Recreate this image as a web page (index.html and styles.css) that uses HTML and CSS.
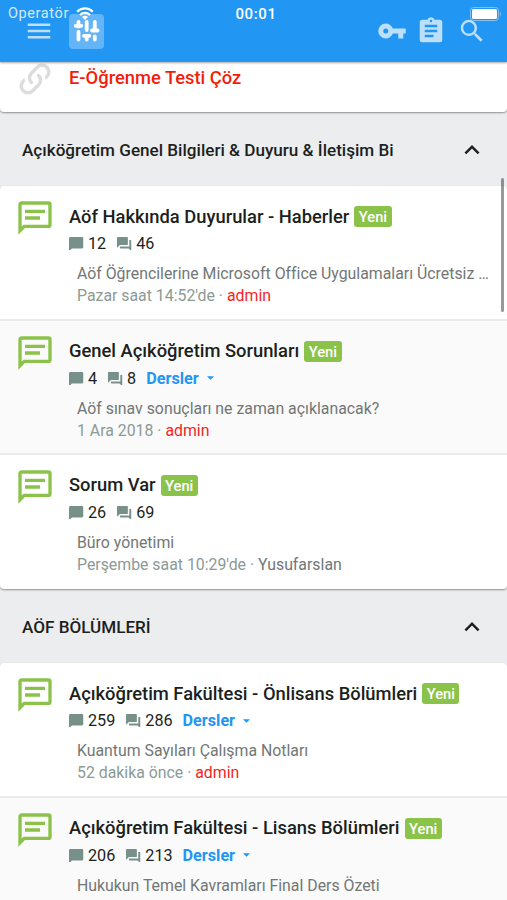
FILE: index.html
```html
<!doctype html>
<html lang="tr">
  <head>
    <meta charset="UTF-8" />
    <meta name="viewport" content="width=device-width, initial-scale=1.0" />
    <title>Açıköğretim Forum</title>
    <link rel="stylesheet" href="styles.css">
  </head>
  <body>
    <!-- Shared icons -->
    <svg class="sprite" width="0" height="0">
      <symbol id="i-forum" viewBox="0 0 24 24"><path d="M20,2A2,2 0 0,1 22,4V16A2,2 0 0,1 20,18H6L2,22V4C2,2.89 2.9,2 4,2H20M4,4V17.17L5.17,16H20V4H4M6,7H18V9H6V7M6,11H15V13H6V11Z"/></symbol>
      <symbol id="i-topics" viewBox="2 2 20 18"><path d="M20,2H4A2,2 0 0,0 2,4V22L6,18H20A2,2 0 0,0 22,16V4C22,2.89 21.1,2 20,2Z"/></symbol>
      <symbol id="i-posts" viewBox="2 2 20 18"><path d="M17,12V3A1,1 0 0,0 16,2H3A1,1 0 0,0 2,3V17L6,13H16A1,1 0 0,0 17,12M21,6H19V15H6V17A1,1 0 0,0 7,18H18L22,22V7A1,1 0 0,0 21,6Z"/></symbol>
      <symbol id="i-up" viewBox="0 0 24 24"><path d="M7.41,15.41L12,10.83L16.59,15.41L18,14L12,8L6,14L7.41,15.41Z"/></symbol>
      <symbol id="i-down" viewBox="0 0 10 5"><path d="M0,0H10L5,5Z"/></symbol>
    </svg>

    <header class="header">
      <div class="status-bar">
        <div class="network">
          <span class="carrier">Operatör</span>
          <svg class="wifi" viewBox="0 0 18 13"><path d="M1.2,4.8A10.8,10.8 0 0,1 16.8,4.8M4,7.9A7,7 0 0,1 14,7.9" /><path class="dot" d="M9,13L6,10A4.2,4.2 0 0,1 12,10Z"/></svg>
        </div>
        <span class="clock">00:01</span>
        <svg class="battery" viewBox="0 0 32 14"><rect class="shell" x="0.5" y="0.5" width="28" height="13" rx="3"/><rect x="2" y="2" width="25" height="10" rx="1.5"/><path class="tip" d="M30,4.5Q32,7 30,9.5Z"/></svg>
      </div>
      <nav class="nav">
        <svg class="icon" viewBox="0 0 24 24"><path d="M3,6H21V8H3V6M3,11H21V13H3V11M3,16H21V18H3V16Z"/></svg>
        <span class="logo">
          <svg viewBox="0 0 35 35"><path d="M9.5,8V12.5M9.5,18V25.5M17.7,8V16M17.7,22V25.5M25.8,8V15.5M25.8,22.5V25.5M6.8,11.8H12.4M15,21.8H20.4M23,16.5H28.6"/></svg>
        </span>
        <svg class="icon key" viewBox="0 0 24 24"><path d="M7,14A2,2 0 0,1 5,12A2,2 0 0,1 7,10A2,2 0 0,1 9,12A2,2 0 0,1 7,14M12.65,10C11.83,7.67 9.61,6 7,6A6,6 0 0,0 1,12A6,6 0 0,0 7,18C9.61,18 11.83,16.33 12.65,14H17V18H21V14H23V10H12.65Z"/></svg>
        <svg class="icon clipboard" viewBox="0 0 24 24"><path d="M17,9H7V7H17M17,13H7V11H17M14,17H7V15H14M12,3A1,1 0 0,1 13,4A1,1 0 0,1 12,5A1,1 0 0,1 11,4A1,1 0 0,1 12,3M19,3H14.82C14.4,1.84 13.3,1 12,1C10.7,1 9.6,1.84 9.18,3H5A2,2 0 0,0 3,5V19A2,2 0 0,0 5,21H19A2,2 0 0,0 21,19V5A2,2 0 0,0 19,3Z"/></svg>
        <svg class="icon search" viewBox="0 0 24 24"><path d="M9.5,3A6.5,6.5 0 0,1 16,9.5C16,11.11 15.41,12.59 14.44,13.73L14.71,14H15.5L20.5,19L19,20.5L14,15.5V14.71L13.73,14.44C12.59,15.41 11.11,16 9.5,16A6.5,6.5 0 0,1 3,9.5A6.5,6.5 0 0,1 9.5,3M9.5,5C7,5 5,7 5,9.5C5,12 7,14 9.5,14C12,14 14,12 14,9.5C14,7 12,5 9.5,5Z"/></svg>
      </nav>
    </header>

    <main>
      <section class="card link-card">
        <svg class="link-icon" viewBox="0 0 24 24"><path d="M10.59,13.41C11,13.8 11,14.44 10.59,14.83C10.2,15.22 9.56,15.22 9.17,14.83C7.22,12.88 7.22,9.71 9.17,7.76V7.76L12.71,4.22C14.66,2.27 17.83,2.27 19.78,4.22C21.73,6.17 21.73,9.34 19.78,11.29L18.29,12.78C18.3,11.96 18.17,11.14 17.89,10.36L18.36,9.88C19.54,8.71 19.54,6.81 18.36,5.64C17.19,4.46 15.29,4.46 14.12,5.64L10.59,9.17C9.41,10.34 9.41,12.24 10.59,13.41M13.41,9.17C13.8,8.78 14.44,8.78 14.83,9.17C16.78,11.12 16.78,14.29 14.83,16.24V16.24L11.29,19.78C9.34,21.73 6.17,21.73 4.22,19.78C2.27,17.83 2.27,14.66 4.22,12.71L5.71,11.22C5.7,12.04 5.83,12.86 6.11,13.65L5.64,14.12C4.46,15.29 4.46,17.19 5.64,18.36C6.81,19.54 8.71,19.54 9.88,18.36L13.41,14.83C14.59,13.66 14.59,11.76 13.41,10.59C13,10.2 13,9.56 13.41,9.17Z"/></svg>
        <a class="link-title">E-Öğrenme Testi Çöz</a>
      </section>

      <div class="category">
        <h2>Açıköğretim Genel Bilgileri &amp; Duyuru &amp; İletişim Bi</h2>
        <svg class="toggle"><use href="#i-up"/></svg>
      </div>
      <section class="card">
        <article class="forum">
          <svg class="forum-icon"><use href="#i-forum"/></svg>
          <div class="forum-body">
            <h3><span>Aöf Hakkında Duyurular - Haberler</span> <span class="badge">Yeni</span></h3>
            <div class="stats">
              <svg><use href="#i-topics"/></svg><span>12</span>
              <svg><use href="#i-posts"/></svg><span>46</span>
            </div>
            <p class="latest">Aöf Öğrencilerine Microsoft Office Uygulamaları Ücretsiz …</p>
            <p class="meta">Pazar saat 14:52'de · <span class="admin">admin</span></p>
          </div>
        </article>
        <article class="forum alt">
          <svg class="forum-icon"><use href="#i-forum"/></svg>
          <div class="forum-body">
            <h3><span>Genel Açıköğretim Sorunları</span> <span class="badge">Yeni</span></h3>
            <div class="stats">
              <svg><use href="#i-topics"/></svg><span>4</span>
              <svg><use href="#i-posts"/></svg><span>8</span>
              <a class="lessons">Dersler <svg><use href="#i-down"/></svg></a>
            </div>
            <p class="latest">Aöf sınav sonuçları ne zaman açıklanacak?</p>
            <p class="meta">1 Ara 2018 · <span class="admin">admin</span></p>
          </div>
        </article>
        <article class="forum">
          <svg class="forum-icon"><use href="#i-forum"/></svg>
          <div class="forum-body">
            <h3><span>Sorum Var</span> <span class="badge">Yeni</span></h3>
            <div class="stats">
              <svg><use href="#i-topics"/></svg><span>26</span>
              <svg><use href="#i-posts"/></svg><span>69</span>
            </div>
            <p class="latest">Büro yönetimi</p>
            <p class="meta">Perşembe saat 10:29'de · <span class="user">Yusufarslan</span></p>
          </div>
        </article>
      </section>

      <div class="category">
        <h2>AÖF BÖLÜMLERİ</h2>
        <svg class="toggle"><use href="#i-up"/></svg>
      </div>
      <section class="card">
        <article class="forum">
          <svg class="forum-icon"><use href="#i-forum"/></svg>
          <div class="forum-body">
            <h3><span>Açıköğretim Fakültesi - Önlisans Bölümleri</span> <span class="badge">Yeni</span></h3>
            <div class="stats">
              <svg><use href="#i-topics"/></svg><span>259</span>
              <svg><use href="#i-posts"/></svg><span>286</span>
              <a class="lessons">Dersler <svg><use href="#i-down"/></svg></a>
            </div>
            <p class="latest">Kuantum Sayıları Çalışma Notları</p>
            <p class="meta">52 dakika önce · <span class="admin">admin</span></p>
          </div>
        </article>
        <article class="forum alt">
          <svg class="forum-icon"><use href="#i-forum"/></svg>
          <div class="forum-body">
            <h3><span>Açıköğretim Fakültesi - Lisans Bölümleri</span> <span class="badge">Yeni</span></h3>
            <div class="stats">
              <svg><use href="#i-topics"/></svg><span>206</span>
              <svg><use href="#i-posts"/></svg><span>213</span>
              <a class="lessons">Dersler <svg><use href="#i-down"/></svg></a>
            </div>
            <p class="latest">Hukukun Temel Kavramları Final Ders Özeti</p>
          </div>
        </article>
      </section>
    </main>
    <div class="scrollbar"></div>
  </body>
</html>
```
FILE: styles.css
```css
* {
  box-sizing: border-box;
}

body {
  position: relative;
  margin: 0;
  height: 900px;
  overflow: hidden;
  background: #ecedef;
  color: #1c1f20;
  font-family: Roboto, "Liberation Sans", sans-serif;
}

h2,
h3,
p {
  margin: 0;
  font-weight: 500;
}

svg {
  display: block;
  flex: none;
  fill: currentColor;
}

.sprite {
  position: absolute;
}

/* Header */
.header {
  position: relative;
  z-index: 2;
  height: 62px;
  background: #2196f3;
  box-shadow: 0 1px 2px rgba(0, 0, 0, 0.35);
}

/* The phone's status bar lies over the navigation */
.status-bar {
  position: absolute;
  z-index: 1;
  top: 0;
  left: 0;
  right: 0;
  display: grid;
  grid-template-columns: 1fr auto 1fr;
  align-items: center;
  height: 27px;
  padding: 0 5px 0 8px;
  color: #fff;
  font-size: 14px;
}

.network {
  display: flex;
  align-items: center;
}

.carrier {
  width: 68px;
  color: #d3eafd;
  font-size: 14.5px;
  letter-spacing: 0.6px;
  white-space: nowrap;
}

.wifi {
  width: 18px;
  height: 13px;
  fill: none;
  stroke: #fff;
  stroke-width: 2.2;
}

.wifi .dot {
  fill: #fff;
  stroke: none;
}

.clock {
  padding-left: 2px;
  font-size: 15px;
  font-weight: 500;
  letter-spacing: 0.6px;
}

.battery {
  justify-self: end;
  width: 32px;
  height: 14px;
}

.battery .shell {
  fill: none;
  stroke: #7fc2f8;
}

.battery .tip {
  fill: #7fc2f8;
}

.nav {
  display: flex;
  align-items: center;
  height: 62px;
  padding-left: 24px;
}

.icon {
  width: 30px;
  height: 30px;
  color: #bcdffb;
}

.logo {
  width: 35px;
  height: 35px;
  margin-left: 15px;
  border-radius: 4px;
  background: #64b5f7;
}

.logo svg {
  width: 35px;
  height: 35px;
  fill: none;
  stroke: #fff;
  stroke-width: 3.8;
  stroke-linecap: round;
}

.key {
  margin-left: 273px;
}

.clipboard {
  margin: 0 11px 0 9px;
}

/* Cards */
.card {
  overflow: hidden;
  border-radius: 4px;
  background: #fff;
  box-shadow: 0 1px 2px rgba(0, 0, 0, 0.4);
}

.link-card {
  display: flex;
  height: 50px;
  padding-left: 15px;
  border-radius: 0 0 4px 4px;
}

.link-icon {
  width: 40px;
  height: 40px;
  margin-top: -3px;
  color: #dcdcdc;
}

.link-title {
  margin-left: 14px;
  color: #f21d0d;
  font-size: 18.35px;
  font-weight: 500;
  line-height: 32px;
}

.category {
  display: flex;
  align-items: center;
  justify-content: space-between;
  height: 74.4px;
  padding: 2px 20px 0 22px;
}

.category h2 {
  font-size: 17.1px;
}

.toggle {
  width: 30px;
  height: 30px;
}

.forum {
  display: flex;
  height: 134.2px;
  padding: 12px 17px 0 15px;
  border-bottom: 2px solid #ebebeb;
}

.forum:last-child {
  border-bottom: 0;
}

.forum.alt {
  background: #fafafa;
}

.forum-icon {
  width: 40px;
  height: 40px;
  color: #8bc34a;
}

.forum-body {
  flex: 1;
  min-width: 0;
  padding: 4.6px 0 0 14px;
}

.forum h3 {
  display: flex;
  align-items: center;
  gap: 5px;
  height: 27px;
  font-size: 18.35px;
  white-space: nowrap;
}

.badge {
  height: 21px;
  margin-top: 1px;
  padding: 0 4.5px;
  border-radius: 3px;
  background: #8bc34a;
  color: #fff;
  font-size: 14.7px;
  line-height: 22px;
}

.stats {
  display: flex;
  align-items: center;
  height: 28px;
  font-size: 16.2px;
}

.stats > svg {
  width: 14.5px;
  height: 13px;
  margin-right: 4.5px;
  color: #78908a;
}

.stats > span {
  margin-right: 11px;
}

.lessons {
  display: flex;
  align-items: center;
  gap: 8px;
  margin-left: -1px;
  color: #2196f3;
  font-weight: 700;
}

.lessons svg {
  width: 7px;
  height: 4px;
}

.latest,
.meta {
  margin-left: 8px;
  font-size: 15.85px;
  font-weight: 400;
  line-height: 22px;
  white-space: nowrap;
}

.latest {
  margin-top: 5.4px;
  color: #727776;
}

.meta {
  color: #8b9a96;
}

.admin {
  color: #f51f1f;
}

.user {
  color: #727776;
}

.scrollbar {
  position: absolute;
  z-index: 3;
  top: 178px;
  right: 3px;
  width: 3px;
  height: 134px;
  border-radius: 2px;
  background: rgba(0, 0, 0, 0.4);
}
```
